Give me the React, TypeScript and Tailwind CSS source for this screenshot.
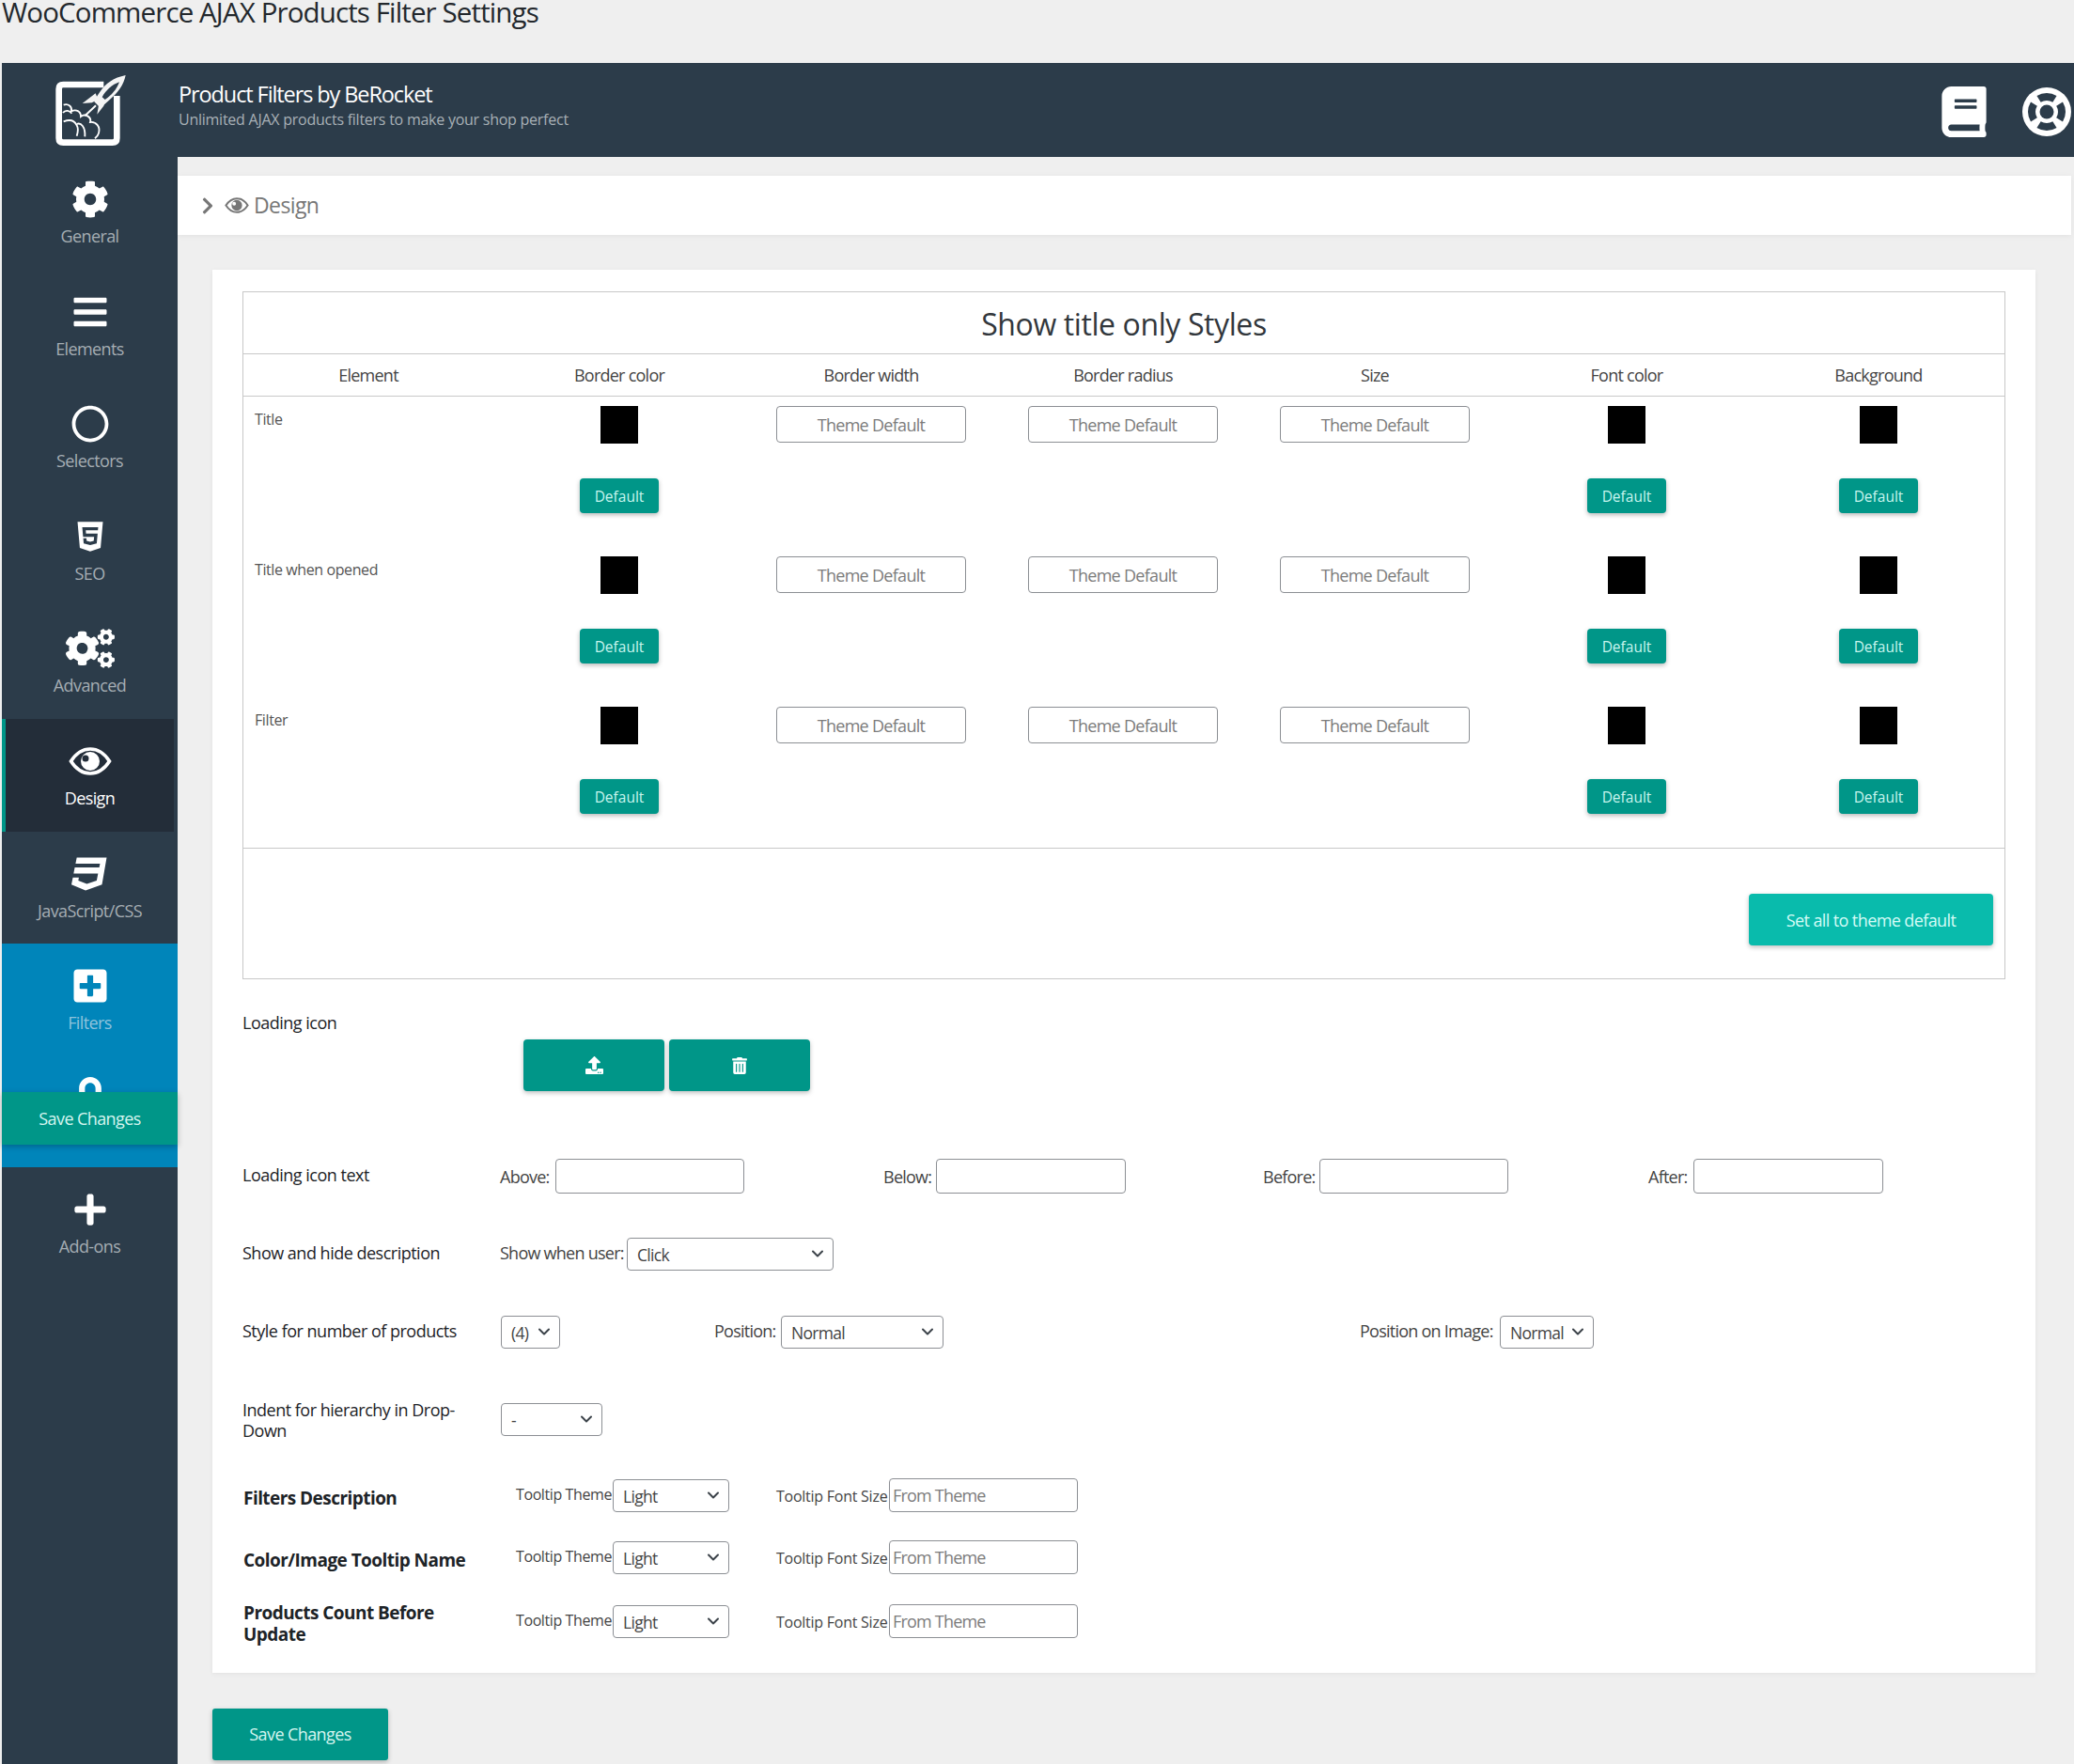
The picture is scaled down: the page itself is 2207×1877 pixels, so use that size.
import React from "react";
import { FaCog, FaBars, FaRegCircle, FaHtml5, FaCogs, FaCss3, FaPlusSquare, FaPlus, FaBook, FaChevronRight, FaUpload, FaTrashAlt, FaLock } from "react-icons/fa";
import { ChevronDown } from "lucide-react";

const Logo = () => (
  <svg width="110" height="95" viewBox="0 0 330 285" fill="none">
    <path d="M208 60H79Q65 60 65 74V231Q65 245 79 245H236Q250 245 250 231V96" stroke="#fff" strokeWidth="20" />
    <path d="M278 30C240 38 215 55 195 85C185 100 180 108 178 115L195 132C205 128 215 120 225 110C255 85 272 60 278 30Z" fill="#f4f4f4" />
    <path d="M258 52C235 60 215 78 203 100L212 108C232 95 250 75 258 52Z" fill="#2c3c4a" />
    <path d="M140 120L182 88L190 108L170 118Z M187 155L192 125L214 110L208 128Z" fill="#f4f4f4" />
    <path d="M183 127L148 160" stroke="#fff" strokeWidth="6" />
    <g stroke="#fff" strokeWidth="5.5" fill="none">
      <path d="M80 125C95 120 108 130 105 145C120 138 135 145 135 162C150 150 170 165 165 180C185 178 198 195 192 215C190 222 185 228 180 232" />
      <path d="M78 150C85 140 100 142 106 152" />
      <path d="M80 178C100 170 115 175 122 190C128 200 125 215 122 224" />
      <path d="M122 186C135 180 150 195 148 226" />
    </g>
  </svg>
);

const LifeRing = () => (
  <svg width="52" height="52" viewBox="0 0 52 52">
    <circle cx="26" cy="26" r="26" fill="#fff" />
    <circle cx="26" cy="26" r="16" fill="none" stroke="#2c3c4a" strokeWidth="8" pathLength="360" strokeDasharray="64 26" strokeDashoffset="32" />
    <circle cx="26" cy="26" r="7.5" fill="#2c3c4a" />
  </svg>
);

const EyeIcon = ({ w, h }: { w: number; h: number }) => (
  <svg width={w} height={h} viewBox="0 0 46 30" fill="none">
    <path d="M2.5 15C8 6.5 15 2 23 2s15 4.5 20.5 13C38 23.5 31 28 23 28S8 23.5 2.5 15z" stroke="currentColor" strokeWidth="3.6" />
    <path fillRule="evenodd" clipRule="evenodd" d="M23 5a10 10 0 1 1 0 20 10 10 0 0 1 0-20zm-5 3.5a3.5 3.5 0 1 0 0 7 3.5 3.5 0 0 0 0-7z" fill="currentColor" />
  </svg>
);

const NavItem = ({ icon, label, active, muted }: { icon: React.ReactNode; label: string; active?: boolean; muted?: boolean }) => (
  <div className={`h-[119.6px] flex flex-col items-center pt-[25px] ${active ? "bg-[#232d39] border-l-4 border-[#009688] mr-[4px]" : ""}`}>
    <div className="h-[40px] flex items-center justify-center text-white">{icon}</div>
    <div className={`mt-[7px] text-[18px] leading-[24px] tracking-[-0.6px] ${active ? "text-white" : muted ? "text-[#8fc3dc]" : "text-[#a5adb3]"}`}>{label}</div>
  </div>
);

const Sidebar = () => (
  <aside className="w-[187px] shrink-0 bg-[#2c3c4a] h-[1810px]">
    <div className="h-[100px] flex justify-center pt-[3px]">
      <Logo />
    </div>
    <NavItem icon={<FaCog size={40} />} label="General" />
    <NavItem icon={<FaBars size={40} />} label="Elements" />
    <NavItem icon={<FaRegCircle size={40} />} label="Selectors" />
    <NavItem icon={<FaHtml5 size={36} />} label="SEO" />
    <NavItem icon={<FaCogs size={52} />} label="Advanced" />
    <NavItem icon={<EyeIcon w={46} h={30} />} label="Design" active />
    <NavItem icon={<FaCss3 size={40} />} label="JavaScript/CSS" />
    <div className="relative bg-[#0085ba] h-[238px]">
      <NavItem icon={<FaPlusSquare size={40} />} label="Filters" muted />
      <div className="flex justify-center pt-[22px] text-white">
        <FaLock size={40} />
      </div>
      <div className="absolute left-0 right-0 top-[158px] h-[56px] bg-[#009688] shadow-[0_2px_6px_rgba(0,0,0,0.25)] flex items-center justify-center text-[#d5f5ef] text-[18px] tracking-[-0.6px]">Save Changes</div>
    </div>
    <NavItem icon={<FaPlus size={38} />} label="Add-ons" />
  </aside>
);

const TextBox = ({ w, h = "h-[37px]", value = "", placeholder }: { w: string; h?: string; value?: string; placeholder?: boolean }) => (
  <input readOnly defaultValue={value} className={`${w} ${h} border border-[#8c8f94] rounded-[4px] bg-white text-[18px] tracking-[-0.8px] outline-none ${placeholder ? "pl-[3px] text-[#7c7c7c]" : ""}`} />
);

const Select = ({ w, value, className = "" }: { w: string; value: string; className?: string }) => (
  <div className={`${w} ${className} relative h-[35px] border border-[#8c8f94] rounded-[4px] bg-white flex items-center pl-[10px] pt-[2px] text-[17.5px] tracking-[-0.7px] text-[#444]`}>
    <span>{value}</span>
    <ChevronDown size={20} strokeWidth={2.4} className="absolute right-[6px] top-[6px] text-[#3c434a]" />
  </div>
);

const Swatch = () => <div className="w-[40px] h-[40px] bg-black" />;

const DefaultBtn = () => (
  <button className="w-[84px] h-[37px] mt-[37px] pt-[2px] bg-[#009688] rounded-[4px] text-[#c8f5ee] text-[15.5px] shadow-[0_2px_5px_rgba(0,0,0,0.28)]">Default</button>
);

const ThemeInput = () => (
  <div className="flex justify-center">
    <input readOnly defaultValue="Theme Default" className="w-[202px] h-[39px] border border-[#8c8f94] rounded-[4px] text-center text-[18px] tracking-[-0.7px] text-[#7c7c7c] outline-none" />
  </div>
);

const SwatchCell = () => (
  <div className="flex flex-col items-center">
    <Swatch />
    <DefaultBtn />
  </div>
);

const headers = ["Element", "Border color", "Border width", "Border radius", "Size", "Font color", "Background"];
const rows = ["Title", "Title when opened", "Filter"];

const StyleTable = () => (
  <div className="border border-[#c8c8c8] text-[#444]">
    <div className="h-[66px] pt-[2px] flex items-center justify-center text-[32px] tracking-[-0.4px] text-[#32373c] border-b border-[#c8c8c8]">Show title only Styles</div>
    <div className="h-[45px] grid grid-cols-[266px_repeat(6,1fr)] items-center text-center text-[18px] tracking-[-0.75px] border-b border-[#c8c8c8]">
      {headers.map((h) => (
        <div key={h}>{h}</div>
      ))}
    </div>
    {rows.map((r) => (
      <div key={r} className="h-[160px] grid grid-cols-[266px_repeat(6,1fr)] pt-[10px]">
        <div className="pl-[12px] pt-[2px] text-[16px] leading-[24px] tracking-[-0.4px] text-[#555]">{r}</div>
        <SwatchCell />
        <ThemeInput />
        <ThemeInput />
        <ThemeInput />
        <SwatchCell />
        <SwatchCell />
      </div>
    ))}
    <div className="h-[139px] border-t border-[#c8c8c8] flex justify-end items-start pt-[48px] pr-[12px]">
      <button className="w-[260px] h-[55px] pt-[2px] bg-[#09bbac] rounded-[4px] text-[#d5fbf6] text-[18px] tracking-[-0.6px] shadow-[0_2px_5px_rgba(0,0,0,0.25)]">Set all to theme default</button>
    </div>
  </div>
);

const Label = ({ children, bold }: { children: React.ReactNode; bold?: boolean }) => (
  <div className={`w-[274px] shrink-0 pr-[8px] text-[#1d2327] ${bold ? "font-bold pl-[1px] pt-[6px] text-[19px] leading-[23px] tracking-[-0.55px]" : "font-medium text-[18px] leading-[22px] tracking-[-0.5px] pb-[3px]"}`}>{children}</div>
);

const Field = ({ label, w, children, up }: { label: string; w: string; children: React.ReactNode; up?: boolean }) => (
  <div className="flex items-center">
    <span className={`${w} ${up ? "pb-[3px]" : "pt-[2px]"} shrink-0 whitespace-nowrap text-[18px] tracking-[-0.75px] text-[#444]`}>{label}</span>
    {children}
  </div>
);

const TooltipRow = ({ label, className }: { label: string; className: string }) => (
  <div className={`flex items-center ${className}`}>
    <Label bold>{label}</Label>
    <div className="ml-[17px] pb-[3px] w-[103px] text-[16px] tracking-[-0.4px] text-[#444] whitespace-nowrap">Tooltip Theme</div>
    <Select w="w-[124px]" value="Light" />
    <div className="ml-[50px] pt-[1px] w-[120px] text-[16px] tracking-[-0.25px] text-[#444] whitespace-nowrap">Tooltip Font Size</div>
    <TextBox w="w-[201px]" h="h-[36px]" value="From Theme" placeholder />
  </div>
);

const Form = () => (
  <div>
    <div className="flex mt-[35px]">
      <Label>Loading icon</Label>
      <div className="flex gap-[5px] ml-[25px] mt-[29px]">
        <button className="w-[150px] h-[55px] bg-[#009688] rounded-[4px] flex items-center justify-center text-white shadow-[0_2px_5px_rgba(0,0,0,0.25)]"><FaUpload size={19} /></button>
        <button className="w-[150px] h-[55px] bg-[#009688] rounded-[4px] flex items-center justify-center text-white shadow-[0_2px_5px_rgba(0,0,0,0.25)]"><FaTrashAlt size={18} /></button>
      </div>
    </div>
    <div className="flex items-center mt-[72px]">
      <Label>Loading icon text</Label>
      <div className="flex-1 grid grid-cols-[408px_404px_410px_1fr]">
        <Field label="Above:" w="w-[59px]"><TextBox w="w-[201px]" /></Field>
        <Field label="Below:" w="w-[56px]"><TextBox w="w-[202px]" /></Field>
        <Field label="Before:" w="w-[60px]"><TextBox w="w-[201px]" /></Field>
        <Field label="After:" w="w-[48px]"><TextBox w="w-[202px]" /></Field>
      </div>
    </div>
    <div className="flex items-center mt-[47px]">
      <Label>Show and hide description</Label>
      <Field label="Show when user:" w="w-[135px]" up><Select w="w-[220px]" value="Click" /></Field>
    </div>
    <div className="flex items-center mt-[48px]">
      <Label>Style for number of products</Label>
      <div className="w-[228px] pl-[1px]"><Select w="w-[63px]" value="(4)" /></div>
      <div className="w-[687px]"><Field label="Position:" w="w-[71px]" up><Select w="w-[173px]" value="Normal" /></Field></div>
      <Field label="Position on Image:" w="w-[149px]" up><Select w="w-[100px]" value="Normal" /></Field>
    </div>
    <div className="flex items-center mt-[54px]">
      <Label>Indent for hierarchy in Drop-Down</Label>
      <div className="pl-[1px]"><Select w="w-[108px]" value="-" className="mb-[5px]" /></div>
    </div>
    <TooltipRow label="Filters Description" className="mt-[37px]" />
    <TooltipRow label="Color/Image Tooltip Name" className="mt-[30px]" />
    <TooltipRow label="Products Count Before Update" className="mt-[24px]" />
  </div>
);

export default function App() {
  return (
    <div className="h-[1877px] overflow-hidden bg-[#efefef] font-['Open_Sans',sans-serif]">
      <h1 className="h-[67px] pl-[2px] text-[29.5px] leading-[25px] tracking-[-0.88px] text-[#23282d]">WooCommerce AJAX Products Filter Settings</h1>
      <div className="flex pl-[2px]">
        <Sidebar />
        <main className="flex-1 min-w-0">
          <header className="h-[100px] bg-[#2c3c4a] flex items-center justify-between pr-[3px]">
            <div className="pl-[1px] pb-[13px]">
              <div className="text-[23.5px] leading-[32px] tracking-[-1.1px] text-white">Product Filters by BeRocket</div>
              <div className="text-[16px] leading-[22px] tracking-[-0.25px] text-[#a8b0b6]">Unlimited AJAX products filters to make your shop perfect</div>
            </div>
            <div className="flex items-center gap-[35px] pt-[4px] text-white">
              <FaBook size={54} />
              <LifeRing />
            </div>
          </header>
          <div className="mt-[20px] mr-[3px] h-[63px] bg-white shadow-[0_1px_6px_rgba(0,0,0,0.06)] flex items-center pl-[22px] text-[#777]">
            <FaChevronRight size={20} />
            <span className="ml-[8px] flex"><EyeIcon w={26} h={17} /></span>
            <span className="ml-[5px] text-[23px] tracking-[-0.6px]">Design</span>
          </div>
          <section className="mt-[37px] ml-[37px] mr-[41px] bg-white pt-[23px] pb-[29px] px-[32px] shadow-[0_1px_5px_rgba(0,0,0,0.06)]">
            <StyleTable />
            <Form />
          </section>
          <button className="block mt-[38px] ml-[37px] w-[187px] h-[55px] bg-[#009688] rounded-[3px] text-[#d5f5ef] text-[18px] tracking-[-0.6px] shadow-[0_2px_5px_rgba(0,0,0,0.25)]">Save Changes</button>
        </main>
      </div>
    </div>
  );
}
